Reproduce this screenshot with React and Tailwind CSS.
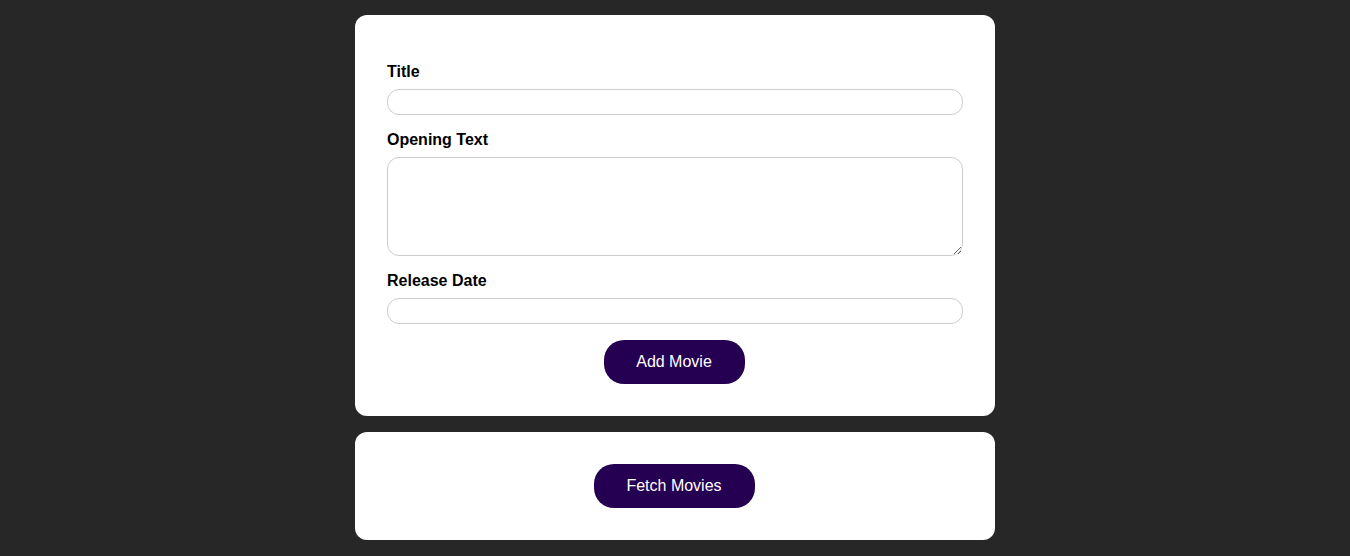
export default function App() {
  return (
    <div className="min-h-screen bg-[#272727] pt-[15px] pb-4 font-['Liberation_Sans',Arial,sans-serif] text-base">
      <section className="mx-auto w-[640px] rounded-[12px] bg-white px-8 pt-[48px] pb-8">
        <form onSubmit={(e) => e.preventDefault()}>
          <div className="mb-4">
            <label htmlFor="title" className="mb-2 block text-left font-bold leading-[18px] text-black">Title</label>
            <input id="title" type="text" className="block h-[26px] w-full rounded-[12px] border border-[#ccc] px-1 outline-none" />
          </div>
          <div className="mb-4">
            <label htmlFor="opening-text" className="mb-2 block text-left font-bold leading-[18px] text-black">Opening Text</label>
            <textarea id="opening-text" rows="5" className="block h-[99px] w-full rounded-[12px] border border-[#ccc] p-1 outline-none" />
          </div>
          <div className="mb-4">
            <label htmlFor="date" className="mb-2 block text-left font-bold leading-[18px] text-black">Release Date</label>
            <input id="date" type="text" className="block h-[26px] w-full rounded-[12px] border border-[#ccc] px-1 outline-none" />
          </div>
          <div className="flex justify-center">
            <button className="mr-[2px] h-[44px] w-[141px] rounded-[20px] bg-[#250052] text-white">Add Movie</button>
          </div>
        </form>
      </section>
      <section className="mx-auto mt-4 flex w-[640px] justify-center rounded-[12px] bg-white py-8">
        <button className="mr-[2px] h-[44px] w-[161px] rounded-[20px] bg-[#250052] text-white">Fetch Movies</button>
      </section>
    </div>
  );
}
